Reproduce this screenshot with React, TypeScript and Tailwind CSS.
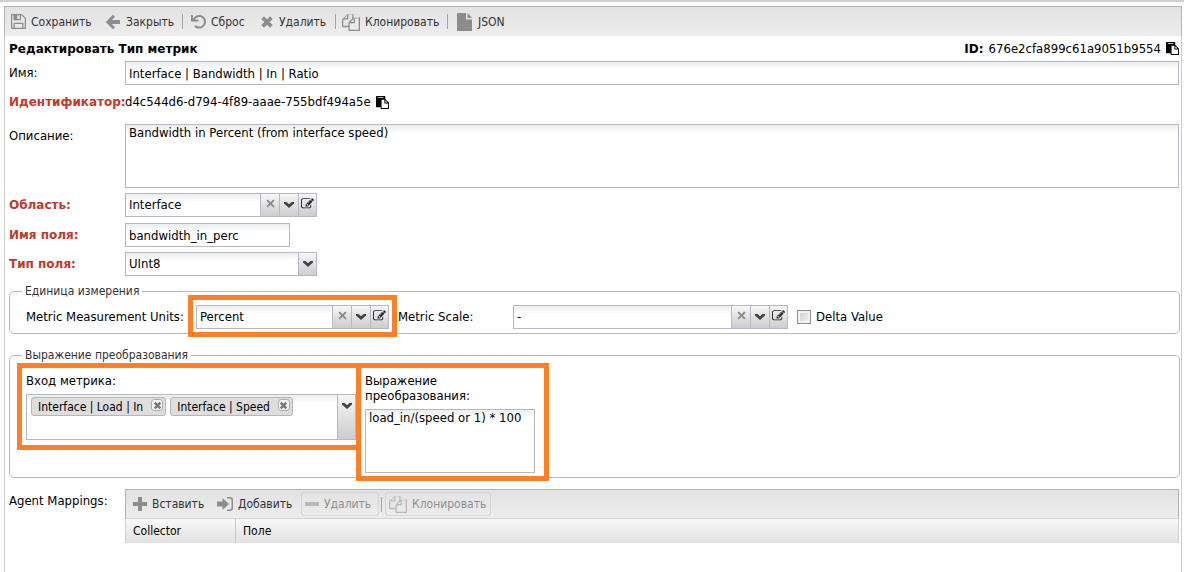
import React, { useState } from "react";
import clsx from "clsx";

const box = "border border-[#b5b8c8] bg-white bg-linear-to-b from-[#eaeeee] to-white to-[8px] text-black outline-none";
const trigger = "flex w-[19px] shrink-0 justify-center border-l border-[#b5b8c8] bg-linear-to-b from-[#f6f6f6] to-[#cdcdcd] last:w-[18px]";

const glyphs = {
  save: { box: "0 256 1536 1536", d: "M384 1664h768v-384H384v384zm896 0h128V768q0-14-10-38.5t-20-34.5l-281-281q-10-10-34-20t-39-10v416q0 40-28 68t-68 28H352q-40 0-68-28t-28-68V384H128v1280h128v-416q0-40 28-68t68-28h832q40 0 68 28t28 68v416zM896 736V416q0-13-9.500-22.500T864 384H672q-13 0-22.500 9.500T640 416v320q0 13 9.500 22.500T672 768h192q13 0 22.500-9.500T896 736zm640 32v928q0 40-28 68t-68 28H96q-40 0-68-28t-28-68V352q0-40 28-68t68-28h928q40 0 88 20t76 48l280 280q28 28 48 76t20 88z" },
  back: { box: "0 0 16 16", d: "M8 .8 10 2.700 6.900 6H15v4H6.900L10 13.300 8 15.200.8 8z" },
  undo: { box: "0 0 16 16", d: "M0 1h2v4.200C3.800 2.700 6 1 8.800 1 12.800 1 16 4.100 16 8s-3.200 7.500-7.200 7.500c-2.200 0-4-.8-5.300-2.200l1.500-1.500c1 1 2.200 1.600 3.800 1.600 2.800 0 5-2.400 5-5.200 0-2.800-2.200-5.100-5-5.100-2 0-3.700 1.100-4.600 2.900H8v2H0z" },
  times: { box: "0 0 16 16", d: "M4.500 1.500 8 5l3.500-3.500 3 3L11 8l3.500 3.500-3 3L8 11l-3.500 3.500-3-3L5 8 1.500 4.500z" },
  cross: { box: "0 0 10 10", d: "M2 .5 5 3.500l3-3L9.500 2l-3 3 3 3L8 9.500l-3-3-3 3L.5 8l3-3-3-3z" },
  copy: { box: "0 0 1792 1792", d: "M1696 384q40 0 68 28t28 68v1216q0 40-28 68t-68 28H736q-40 0-68-28t-28-68v-288H96q-40 0-68-28t-28-68V736q0-40 20-88t48-76l408-408q28-28 76-48t88-20h416q40 0 68 28t28 68v328q68-40 128-40h416zm-544 213L853 896h299V597zM512 213L213 512h299V213zm196 647l316-316V128H640v416q0 40-28 68t-68 28H128v640h512v-256q0-40 20-88t48-76zm956 804V512h-384v416q0 40-28 68t-68 28H768v640h896z" },
  file: { box: "0 0 16 18", d: "M0 0h9v6.500h6V18H0zM10.500 0 15 5h-4.500z" },
  paste: { box: "0 0 1792 1792", d: "M768 1664h896v-640h-416q-40 0-68-28t-28-68V512H768v1152zm256-1440v-64q0-13-9.500-22.500t-22.500-9.500H288q-13 0-22.500 9.500t-9.500 22.500v64q0 13 9.500 22.500t22.500 9.500h704q13 0 22.500-9.500t9.500-22.500zm256 672h299l-299-299v299zm512 128v672q0 40-28 68t-68 28H736q-40 0-68-28t-28-68v-160H96q-40 0-68-28t-28-68V96q0-40 28-68t68-28h1088q40 0 68 28t28 68v328q21 13 36 28l408 408q28 28 48 76t20 88z" },
  edit: { box: "0 0 1792 1600", d: "M888 1184l116-116-152-152-116 116v56h96v96h56zm440-720q-16-16-33 1L945 815q-17 17-1 33t33-1l350-350q17-17 1-33zm80 594v190q0 119-84.500 203.500T1120 1536H288q-119 0-203.500-84.500T0 1248V416q0-119 84.500-203.500T288 128h832q63 0 117 25 15 7 18 23 3 17-9 29l-49 49q-14 14-32 8-23-6-45-6H288q-66 0-113 47t-47 113v832q0 66 47 113t113 47h832q66 0 113-47t47-113v-126q0-13 9-22l64-64q15-15 35-7t20 29zm-96-738l288 288-672 672H640V992zm444 132l-92 92-288-288 92-92q28-28 68-28t68 28l152 152q28 28 28 68t-28 68z" },
  plus: { box: "0 0 14 14", d: "M5 0h4v5h5v4H9v5H5V9H0V5h5z" },
  minus: { box: "0 0 14 14", d: "M1 5h12a1 1 0 0 1 1 1v2a1 1 0 0 1-1 1H1a1 1 0 0 1-1-1V6a1 1 0 0 1 1-1z" },
  append: { box: "0 0 16 14", d: "M5.500 1 12 7l-6.500 6V9.500H0v-5h5.500zM10 0h3a3 3 0 0 1 3 3v8a3 3 0 0 1-3 3h-3v-1.500h3A1.500 1.500 0 0 0 14.500 11V3A1.500 1.500 0 0 0 13 1.500h-3z" },
  chevron: { box: "0 0 10 6", d: "M0 0h2.500L5 2.200 7.500 0H10v1.500L5 6 0 1.500z" },
};

function Glyph({ name, className }: { name: keyof typeof glyphs; className?: string }) {
  return (
    <svg viewBox={glyphs[name].box} fill="currentColor" aria-hidden="true" className={clsx("shrink-0", className)}>
      <path d={glyphs[name].d} />
    </svg>
  );
}

function ToolButton({ icon, size, label, className, disabled }: { icon: keyof typeof glyphs; size: string; label: string; className?: string; disabled?: boolean }) {
  return (
    <button
      type="button"
      disabled={disabled}
      className={clsx("flex h-6 items-center gap-[5px] rounded-[3px] border px-[3px] text-[12px] whitespace-nowrap text-[#333] disabled:opacity-50", disabled ? "border-[#c4c4c4]" : "border-transparent", className)}
    >
      <Glyph name={icon} className={clsx("text-[#8c8c8c]", size)} />
      {label}
    </button>
  );
}

function Separator() {
  return <span className="h-[15px] w-px shrink-0 bg-[#a9a59a]" />;
}

function Combo({ id, value, width, clearable, className }: { id: string; value: string; width: string; clearable?: boolean; className?: string }) {
  return (
    <div className={clsx("flex h-6", box, width, className)}>
      <select id={id} defaultValue={value} className="min-w-0 flex-1 appearance-none bg-transparent pl-[3px] outline-none">
        <option>{value}</option>
      </select>
      {clearable && (
        <button type="button" aria-label="Очистить" className={clsx(trigger, "pt-[5px]")}>
          <Glyph name="cross" className="size-[9px] text-[#8a8a8a]" />
        </button>
      )}
      <button type="button" aria-label="Выбрать" className={clsx(trigger, "pt-2")}>
        <Glyph name="chevron" className="h-[6px] w-[10px] text-[#444]" />
      </button>
      {clearable && (
        <button type="button" aria-label="Изменить" className={clsx(trigger, "pt-[3px]")}>
          <Glyph name="edit" className="h-3 w-[13px] text-[#222]" />
        </button>
      )}
    </div>
  );
}

function Row({ label, htmlFor, required, className, children }: { label: string; htmlFor?: string; required?: boolean; className?: string; children: React.ReactNode }) {
  const labelClass = clsx("w-[116px] shrink-0 pt-1 whitespace-nowrap", required && "font-[DejaVu_Sans] text-[12px] font-bold text-[#c0392b]");
  return (
    <div className={clsx("flex", className)}>
      {htmlFor ? <label htmlFor={htmlFor} className={labelClass}>{label}</label> : <span className={labelClass}>{label}</span>}
      {children}
    </div>
  );
}

function Highlight({ className }: { className: string }) {
  return <div className={clsx("pointer-events-none absolute border-[5px] border-[#ff7f27]", className)} />;
}

function Chip({ label }: { label: string }) {
  return (
    <span className="flex h-[19px] items-center gap-[8px] rounded-[3px] border border-[#bab4b4] bg-[#dedede] pr-[2px] pl-[6px] text-[12px] whitespace-nowrap">
      {label}
      <button type="button" aria-label={"Удалить " + label} className="mb-[3px] flex size-3 items-center justify-center rounded-[3px] border border-[#b0b0b0] bg-[#f2f2f2]">
        <Glyph name="times" className="size-[9px] text-[#777]" />
      </button>
    </span>
  );
}

export default function App() {
  const [delta, setDelta] = useState(false);

  return (
    <div className="flex min-h-screen flex-col border-t-2 border-[#d0d0d0] bg-white font-['DejaVu_Sans_Condensed','DejaVu_Sans',sans-serif] text-[13px] leading-[16px] text-black">
      <div className="mt-1 mr-[2px] ml-1 flex flex-1 flex-col border-x border-[#ccc]">
        <div className="-mx-px flex h-[30px] items-center border border-b-0 border-[#b8b1b1] bg-linear-to-b from-[#e2e2e2] to-[#ededed] pl-[2px]">
          <ToolButton icon="save" size="size-[15px]" label="Сохранить" className="w-[94px]" />
          <ToolButton icon="back" size="size-4" label="Закрыть" className="w-[81px]" />
          <Separator />
          <ToolButton icon="undo" size="size-[15px]" label="Сброс" className="ml-[4px] w-[69px]" />
          <ToolButton icon="times" size="size-[14px]" label="Удалить" className="w-[79px]" />
          <Separator />
          <ToolButton icon="copy" size="size-[18px]" label="Клонировать" className="ml-[2px] w-[109px]" />
          <Separator />
          <ToolButton icon="file" size="h-[18px] w-4" label="JSON" className="ml-[5px]" />
        </div>

        <form className="pr-[2px] pl-1" onSubmit={(e) => e.preventDefault()}>
          <div className="flex h-[25px] items-center justify-between font-[DejaVu_Sans] text-[12px]">
            <h1 className="font-bold">Редактировать Тип метрик</h1>
            <div className="flex items-center gap-[5px]">
              <span className="font-bold">ID:</span>
              <span className="font-['DejaVu_Sans_Condensed'] text-[13px]">676e2cfa899c61a9051b9554</span>
              <button type="button" aria-label="Копировать ID"><Glyph name="paste" className="size-[13px]" /></button>
            </div>
          </div>

          <Row label="Имя:" htmlFor="name">
            <input id="name" defaultValue="Interface | Bandwidth | In | Ratio" className={clsx("h-6 min-w-0 flex-1 px-[3px]", box)} />
          </Row>
          <Row label="Идентификатор:" required className="mt-[5px] h-[34px]">
            <div className="flex h-6 items-center gap-[5px]">
              d4c544d6-d794-4f89-aaae-755bdf494a5e
              <button type="button" aria-label="Копировать идентификатор"><Glyph name="paste" className="size-[13px]" /></button>
            </div>
          </Row>
          <Row label="Описание:" htmlFor="description">
            <textarea id="description" defaultValue="Bandwidth in Percent (from interface speed)" className={clsx("h-16 min-w-0 flex-1 resize-none px-[3px]", box)} />
          </Row>
          <Row label="Область:" htmlFor="scope" required className="mt-[5px]">
            <Combo id="scope" value="Interface" width="w-48" clearable />
          </Row>
          <Row label="Имя поля:" htmlFor="field" required className="mt-[6px]">
            <input id="field" defaultValue="bandwidth_in_perc" className={clsx("h-6 w-[165px] px-[3px]", box)} />
          </Row>
          <Row label="Тип поля:" htmlFor="type" required className="mt-[5px]">
            <Combo id="type" value="UInt8" width="w-48" />
          </Row>

          <fieldset className="mt-[7px] -mr-px rounded-[5px] border border-[#b5b8c8] pr-4 pb-1 pl-4">
            <legend className="-ml-1 px-[3px] text-[12px] text-[#333]">Единица измерения</legend>
            <div className="flex items-center pt-[6px]">
              <label htmlFor="units" className="w-[170px] shrink-0">Metric Measurement Units:</label>
              <div className="relative">
                <Combo id="units" value="Percent" width="w-[193px]" clearable />
                <Highlight className="-inset-x-2 -top-[10px] -bottom-2" />
              </div>
              <label htmlFor="scale" className="ml-[9px] w-[115px] shrink-0">Metric Scale:</label>
              <Combo id="scale" value="-" width="w-[275px]" clearable />
              <input
                id="delta"
                type="checkbox"
                checked={delta}
                onChange={(e) => setDelta(e.target.checked)}
                className="ml-[9px] size-[14px] shrink-0 appearance-none border border-[#8f8f8f] bg-linear-to-br from-[#c8ccd0] to-[#f4f4f4] shadow-[inset_0_0_0_2px_#f2f2f2] checked:bg-[#777]"
              />
              <label htmlFor="delta" className="ml-[5px]">Delta Value</label>
            </div>
          </fieldset>

          <fieldset className="mt-[13px] -mr-px rounded-[5px] border border-[#b5b8c8] pr-4 pb-1 pl-4">
            <legend className="-ml-1 px-[3px] text-[12px] text-[#333]">Выражение преобразования</legend>
            <div className="flex items-start pt-[10px]">
              <div className="relative w-[330px]">
                <label htmlFor="inputs">Вход метрика:</label>
                <div className={clsx("mt-[5px] flex h-[46px]", box)}>
                  <div className="flex min-w-0 flex-1 items-start gap-1 pt-[2px] pl-1">
                    <Chip label="Interface | Load | In" />
                    <Chip label="Interface | Speed" />
                    <input id="inputs" className="w-0 min-w-0 flex-1 bg-transparent outline-none" />
                  </div>
                  <button type="button" aria-label="Выбрать" className={clsx(trigger, "pt-2")}>
                    <Glyph name="chevron" className="h-[6px] w-[10px] text-[#444]" />
                  </button>
                </div>
                <Highlight className="-top-[10px] -right-[5px] -bottom-[10px] -left-[9px]" />
              </div>
              <div className="relative ml-[9px] w-[170px]">
                <label htmlFor="expression" className="block leading-[15px]">Выражение преобразования:</label>
                <textarea id="expression" defaultValue="load_in/(speed or 1) * 100" className={clsx("mt-[6px] block h-16 w-full resize-none px-[3px]", box)} />
                <Highlight className="-top-[10px] -right-[14px] -bottom-2 -left-[9px]" />
              </div>
            </div>
          </fieldset>

          <Row label="Agent Mappings:" className="mt-[11px]">
            <div className="min-w-0 flex-1">
              <div className="flex h-[29px] items-center border border-b-0 border-[#b8b1b1] bg-linear-to-b from-[#e2e2e2] to-[#ededed] pl-[3px]">
                <ToolButton icon="plus" size="size-[14px]" label="Вставить" className="w-[84px]" />
                <ToolButton icon="append" size="h-[14px] w-4" label="Добавить" className="w-[88px]" />
                <ToolButton icon="minus" size="size-[14px]" label="Удалить" disabled className="w-[78px]" />
                <span className="ml-[2px] flex"><Separator /></span>
                <ToolButton icon="copy" size="size-[18px]" label="Клонировать" disabled className="ml-[3px] w-[106px]" />
              </div>
              <table className="w-full table-fixed border border-b-0 border-[#d0d0d0]">
                <thead>
                  <tr className="h-[24px] bg-linear-to-b from-[#f9f9f9] to-[#e3e1e1] text-left text-[12px]">
                    <th className="w-[110px] border-r border-[#c5c5c5] pl-[7px] font-normal">Collector</th>
                    <th className="pl-[7px] font-normal">Поле</th>
                  </tr>
                </thead>
              </table>
            </div>
          </Row>
        </form>
      </div>
    </div>
  );
}
